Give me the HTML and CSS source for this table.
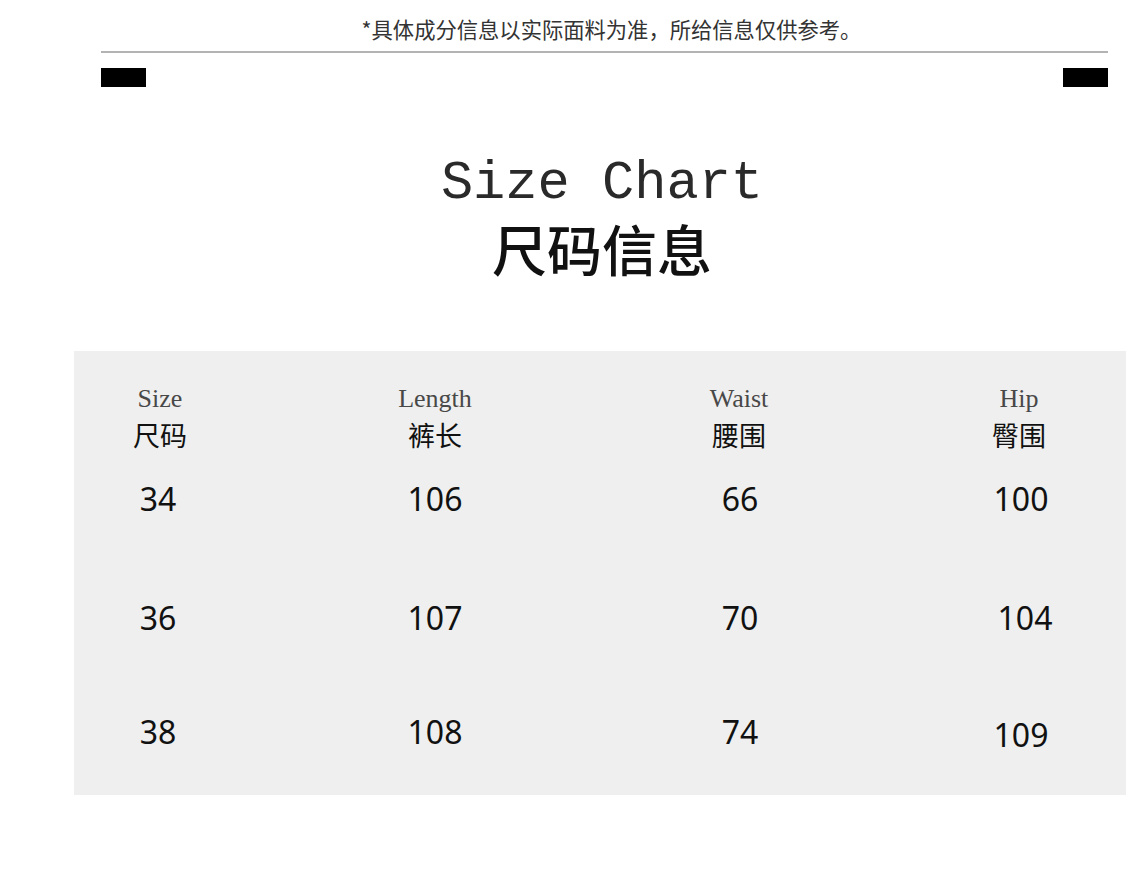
FILE: index.html
```html
<!DOCTYPE html>
<html lang="zh">
<head>
<meta charset="utf-8">
<title>Size Chart</title>
<link rel="stylesheet" href="styles.css">
</head>
<body>
<div class="page">
  <header class="notice">
    <p class="notice-text">*具体成分信息以实际面料为准，所给信息仅供参考。</p>
    <div class="rule"></div>
    <div class="marks">
      <span class="mark"></span>
      <span class="mark"></span>
    </div>
  </header>

  <section class="title">
    <h1 class="title-en">Size Chart</h1>
    <h2 class="title-zh">尺码信息</h2>
  </section>

  <section class="panel">
    <div class="grid">
      <div class="head c1"><span class="en">Size</span><span class="zh">尺码</span></div>
      <div class="head c2"><span class="en">Length</span><span class="zh">裤长</span></div>
      <div class="head c3"><span class="en">Waist</span><span class="zh">腰围</span></div>
      <div class="head c4"><span class="en">Hip</span><span class="zh">臀围</span></div>

      <div class="num c1 r1">34</div>
      <div class="num c2 r1">106</div>
      <div class="num c3 r1">66</div>
      <div class="num c4 r1">100</div>

      <div class="num c1 r2">36</div>
      <div class="num c2 r2">107</div>
      <div class="num c3 r2">70</div>
      <div class="num c4 r2 shift-r">104</div>

      <div class="num c1 r3">38</div>
      <div class="num c2 r3">108</div>
      <div class="num c3 r3">74</div>
      <div class="num c4 r3 shift-d">109</div>
    </div>
  </section>
</div>
</body>
</html>
```

FILE: styles.css
```css
* { box-sizing: border-box; }
html, body { margin: 0; padding: 0; background: #fff; }
body { font-family: "Noto Sans", "Noto Sans CJK SC", sans-serif; color: #111; }

.page {
  width: 1142px;
  height: 891px;
  display: flex;
  flex-direction: column;
}

.notice {
  padding: 0 34px 0 101px;
  display: flex;
  flex-direction: column;
}
.notice-text {
  margin: 17px 0 0 0;
  padding-left: 14px;
  text-align: center;
  font-family: "Noto Sans CJK SC", sans-serif;
  font-size: 21.3px;
  line-height: 24px;
  color: #333;
}
.rule {
  margin-top: 10px;
  height: 2px;
  background: #b3b3b3;
}
.marks {
  margin-top: 15px;
  display: flex;
  justify-content: space-between;
}
.mark {
  width: 45px;
  height: 19px;
  background: #000;
}

.title {
  display: flex;
  flex-direction: column;
  align-items: center;
  padding-left: 62px;
}
.title-en {
  margin: 67px 0 0 0;
  font-family: "Liberation Mono", "Courier New", monospace;
  font-weight: normal;
  font-size: 53.7px;
  line-height: 60px;
  color: #2a2a2a;
}
.title-zh {
  margin: 1px 0 0 0;
  font-family: "Noto Sans CJK SC", sans-serif;
  font-weight: 500;
  font-size: 55px;
  line-height: 64px;
  color: #111;
}

.panel {
  margin: 72px 16px 0 74px;
  background: #efefef;
  padding: 33px 0 40px 0;
}
.grid {
  display: grid;
  grid-template-columns: 172px 378px 230px 1fr;
  align-items: center;
}
.head {
  display: flex;
  flex-direction: column;
  align-items: center;
}
.c4 { padding-left: 58px; }
.en {
  font-family: "Liberation Serif", serif;
  font-size: 26px;
  line-height: 30px;
  color: #484848;
}
.zh {
  margin-top: 4px;
  font-family: "Noto Sans CJK SC", sans-serif;
  font-size: 27px;
  line-height: 34px;
  color: #111;
}
.num {
  text-align: center;
  font-family: "Noto Sans", sans-serif;
  font-size: 32px;
  line-height: 40px;
  color: #111;
}
.c1.num { padding-right: 4px; }
.c3.num { padding-left: 2px; }
.c4.num { padding-left: 62px; }
.r1 { margin-top: 27px; }
.r2 { margin-top: 79px; }
.r3 { margin-top: 71px; }
.c4.shift-r { padding-left: 70px; }
.shift-d { padding-top: 6px; }
```
